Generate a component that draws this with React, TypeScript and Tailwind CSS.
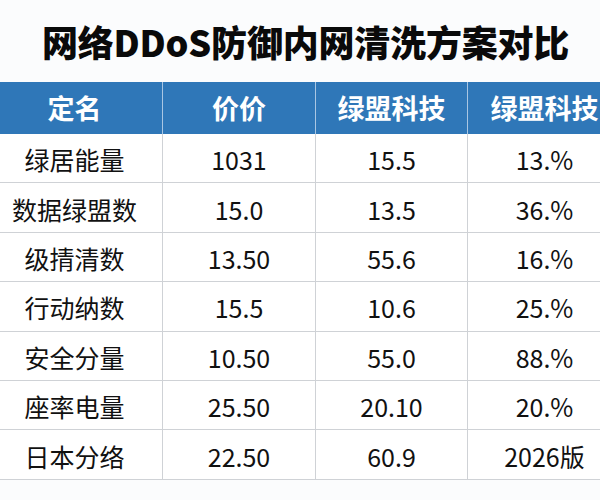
import React from 'react';

const FONT = '"Noto Sans CJK SC", "Noto Sans", sans-serif';

const HEADERS = ['定名', '价价', '绿盟科技', '绿盟科技'];

const ROWS: string[][] = [
  ['绿居能量', '1031', '15.5', '13.%'],
  ['数据绿盟数', '15.0', '13.5', '36.%'],
  ['级掅清数', '13.50', '55.6', '16.%'],
  ['行动纳数', '15.5', '10.6', '25.%'],
  ['安全分量', '10.50', '55.0', '88.%'],
  ['座率电量', '25.50', '20.10', '20.%'],
  ['日本分络', '22.50', '60.9', '2026版'],
];

// column widths — the table runs a little past both edges of the frame
const COLS = ['w-[175px]', 'w-[153px]', 'w-[152px]', 'w-[154px]'];

export default function App() {
  return (
    <div
      className="h-[500px] w-[600px] overflow-hidden bg-[#fbfcfd] text-[#111111]"
      style={{ fontFamily: FONT }}
    >
      {/* Title */}
      <div className="flex h-[82px] items-center justify-center pl-[11px]">
        <h1 className="text-[36px] font-black leading-none tracking-[-0.2px] text-[#0a0a0a]">
          网络DDoS防御内网清洗方案对比
        </h1>
      </div>

      {/* Table */}
      <div className="ml-[-13px] w-[634px]">
        <div className="flex h-[52px] bg-[#2f77b8] text-white">
          {HEADERS.map((h, i) => (
            <div
              key={i}
              className={`${COLS[i]} flex shrink-0 items-center justify-center text-[27px] font-bold ${
                i > 0 ? 'border-l border-[#a9c6e3]' : ''
              }`}
            >
              {h}
            </div>
          ))}
        </div>

        {ROWS.map((row, r) => (
          <div key={r} className="flex h-[49.4px] border-b border-[#cfd2d6] bg-white">
            {row.map((cell, i) => (
              <div
                key={i}
                className={`${COLS[i]} flex shrink-0 items-center justify-center pt-[3px] text-[25px] leading-none ${
                  i > 0 ? 'border-l border-[#cfd2d6]' : ''
                }`}
              >
                {cell}
              </div>
            ))}
          </div>
        ))}
      </div>
    </div>
  );
}
